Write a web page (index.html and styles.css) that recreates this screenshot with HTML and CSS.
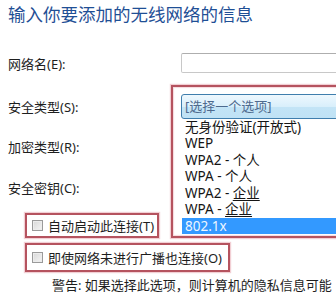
FILE: index.html
```html
<!DOCTYPE html>
<html lang="zh">
<head>
<meta charset="utf-8">
<link rel="stylesheet" href="styles.css">
</head>
<body>
<div class="page">
  <h1 class="title">输入你要添加的无线网络的信息</h1>
  <div class="form">
    <div class="row row-name">
      <span class="label">网络名(E):</span>
      <div class="field"><div class="input"></div></div>
    </div>
    <div class="row row-sec">
      <span class="label">安全类型(S):</span>
      <div class="field">
        <div class="dropdown">
          <div class="select">[选择一个选项]</div>
          <ul class="list">
            <li>无身份验证(开放式)</li>
            <li>WEP</li>
            <li>WPA2 - 个人</li>
            <li>WPA - 个人</li>
            <li>WPA2 - <u>企业</u></li>
            <li>WPA - <u>企业</u></li>
            <li class="selected">802.1x</li>
          </ul>
          <div class="mark mark-dropdown"></div>
        </div>
      </div>
    </div>
    <div class="row row-enc">
      <span class="label">加密类型(R):</span>
    </div>
    <div class="row row-key">
      <span class="label">安全密钥(C):</span>
    </div>
  </div>
  <div class="checks">
    <label class="check check-auto"><span class="box"></span>自动启动此连接(T)</label>
    <label class="check check-hidden"><span class="box"></span>即使网络未进行广播也连接(O)</label>
    <p class="warning">警告: 如果选择此选项，则计算机的隐私信息可能</p>
  </div>
</div>
</body>
</html>
```

FILE: styles.css
```css
* { box-sizing: border-box; }
html, body { margin: 0; padding: 0; background: #fff; overflow: hidden; }
body {
  width: 336px;
  height: 296px;
  font-family: "Noto Sans", "Noto Sans CJK SC", sans-serif;
  color: #1e1e1e;
}
.page { padding: 0 0 0 8px; }
.title {
  margin: 0;
  padding-top: 2px;
  height: 42px;
  font-size: 17.5px;
  font-weight: normal;
  line-height: 24px;
  color: #1f4f95;
  white-space: nowrap;
}
.form { display: flex; flex-direction: column; }
.row {
  display: flex;
  align-items: center;
  font-size: 13px;
}
.label { width: 173px; flex: none; white-space: nowrap; }
.field { flex: 1; min-width: 0; }
.row-name { height: 42px; }
.row-sec { height: 44px; }
.row-enc { height: 36px; }
.row-key { height: 46px; }
.input {
  height: 20px;
  margin-right: -10px;
  border: 1px solid #c8c8c8;
  border-top-color: #aeaeae;
  border-radius: 2px;
  background: #fff;
}
.dropdown { position: relative; z-index: 2; margin-right: -10px; }
.select {
  height: 25px;
  padding: 0 3px;
  line-height: 23px;
  font-size: 13px;
  color: #4e6a8e;
  border: 1px solid #3f7ead;
  border-radius: 3px;
  background: linear-gradient(#eef8fe, #d9effb 50%, #c3e4f6 51%, #bfe2f5);
}
.list {
  position: absolute;
  left: 0;
  right: 0;
  top: 25px;
  margin: 0;
  padding: 0;
  list-style: none;
  background: #fff;
}
.list li {
  height: 16.5px;
  line-height: 16.5px;
  padding-left: 4px;
  font-size: 13.5px;
  color: #151515;
  white-space: nowrap;
}
.list li u { text-underline-offset: 2px; }
.list li.selected {
  margin-left: 1px;
  padding-left: 3px;
  background: #3399ff;
  color: #eef6ff;
}
.mark {
  position: absolute;
  border: 2px solid #b5535f;
  box-shadow: 0 0 1px 1px rgba(230, 160, 170, 0.5), inset 0 0 1px 1px rgba(230, 160, 170, 0.4);
  pointer-events: none;
}
.mark-dropdown { left: -10px; top: -9px; right: -4px; height: 153px; }
.checks { margin-top: 3px; padding-left: 17px; display: flex; flex-direction: column; align-items: flex-start; }
.check {
  display: inline-flex;
  align-items: center;
  gap: 5px;
  padding-left: 5px;
  padding-right: 3px;
  font-size: 13px;
  color: #1e1e1e;
  border: 2px solid #b5535f;
  box-shadow: 0 0 1px 1px rgba(230, 160, 170, 0.5);
  white-space: nowrap;
}
.check-auto { height: 25px; }
.check-hidden { height: 29px; margin-top: 5px; padding-right: 6px; }
.box {
  width: 11px;
  height: 11px;
  border: 1px solid #9a9a9a;
  background: linear-gradient(135deg, #d8d8d8, #f4f4f4);
  box-shadow: inset 0 0 0 1px #ececec;
}
.warning {
  margin: 4px 0 0 27px;
  font-size: 13px;
  line-height: 18px;
  color: #1e1e1e;
  white-space: nowrap;
}
```
